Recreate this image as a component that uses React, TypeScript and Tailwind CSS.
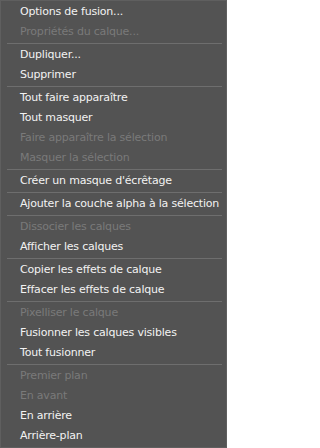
import React from "react";

type Entry = { label: string; disabled?: boolean } | "sep";

const entries: Entry[] = [
  { label: "Options de fusion..." },
  { label: "Propriétés du calque...", disabled: true },
  "sep",
  { label: "Dupliquer..." },
  { label: "Supprimer" },
  "sep",
  { label: "Tout faire apparaître" },
  { label: "Tout masquer" },
  { label: "Faire apparaître la sélection", disabled: true },
  { label: "Masquer la sélection", disabled: true },
  "sep",
  { label: "Créer un masque d'écrêtage" },
  "sep",
  { label: "Ajouter la couche alpha à la sélection" },
  "sep",
  { label: "Dissocier les calques", disabled: true },
  { label: "Afficher les calques" },
  "sep",
  { label: "Copier les effets de calque" },
  { label: "Effacer les effets de calque" },
  "sep",
  { label: "Pixelliser le calque", disabled: true },
  { label: "Fusionner les calques visibles" },
  { label: "Tout fusionner" },
  "sep",
  { label: "Premier plan", disabled: true },
  { label: "En avant", disabled: true },
  { label: "En arrière" },
  { label: "Arrière-plan" },
];

export default function App() {
  return (
    <div className="w-[227px] h-[448px] bg-[#535353] border border-[#5f5f5f] py-px flex flex-col font-['DejaVu_Sans',sans-serif] text-[11px] tracking-[-0.2px]">
      {entries.map((e, i) =>
        e === "sep" ? (
          <div key={i} className="h-[3px] flex items-center pl-[6px] pr-[4px]">
            <div className="h-px w-full bg-[#6e6e6e]" />
          </div>
        ) : (
          <div
            key={i}
            className={
              "h-5 flex items-center pl-[19px] whitespace-nowrap " +
              (e.disabled ? "text-[#7a7a7a]" : "text-[#f2f2f2]")
            }
          >
            {e.label}
          </div>
        )
      )}
    </div>
  );
}
